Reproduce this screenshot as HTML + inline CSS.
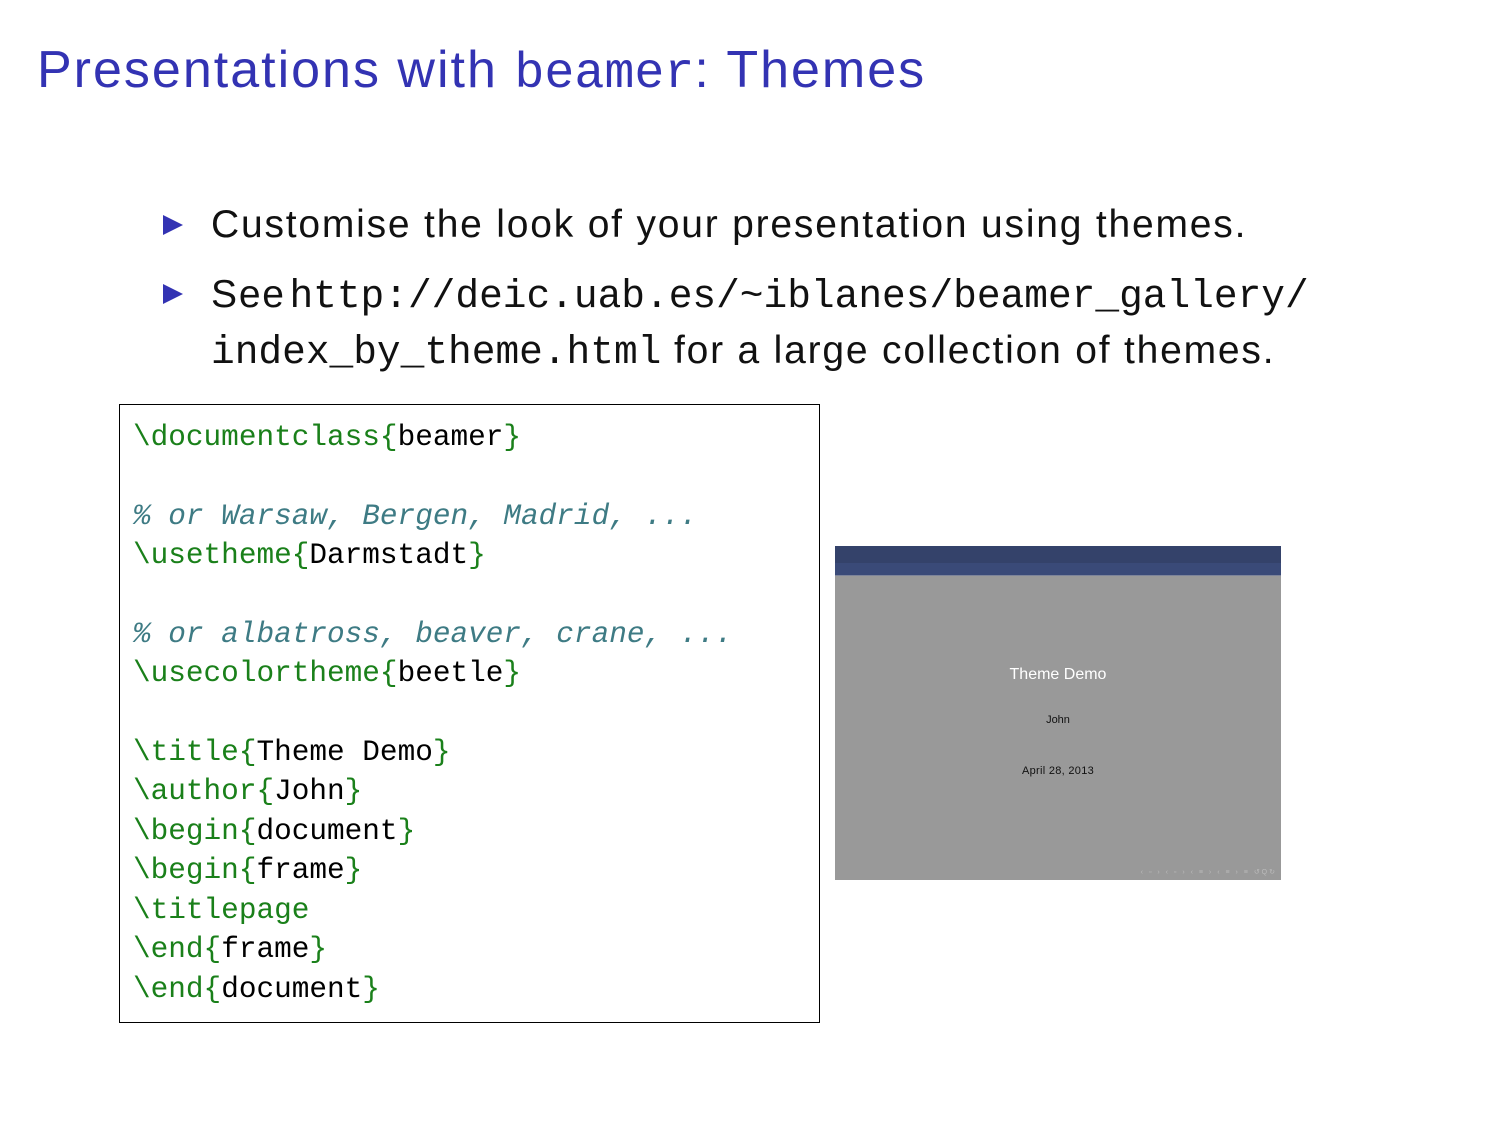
<!DOCTYPE html>
<html><head><meta charset="utf-8"><style>
body{margin:0;width:1512px;height:1134px;background:#fff;position:relative;overflow:hidden;font-family:"Liberation Sans",sans-serif}
.a{position:absolute;white-space:pre}
.t{left:37px;top:40px;font-size:52px;color:#3333b3;letter-spacing:2px}
.tm{font-family:"Liberation Mono",monospace;font-size:50px;letter-spacing:0}
.b{font-size:39px;color:#111;letter-spacing:1.8px}
.m{font-family:"Liberation Mono",monospace;font-size:39.5px;letter-spacing:0}
.tri{position:absolute;width:0;height:0;border-left:20px solid #3333b3;border-top:10px solid transparent;border-bottom:10px solid transparent}
.code{position:absolute;left:119px;top:404px;width:699px;height:617px;border:1.5px solid #000}
.c{position:absolute;left:133px;font-family:"Liberation Mono",monospace;font-size:29.4px;color:#000;white-space:pre}
.g{color:#1a801a}.cm{color:#3e7b84;font-style:italic}
</style></head><body>
<div class="a t">Presentations with <span class="tm">beamer</span>: Themes</div>
<div class="tri" style="left:163px;top:215px"></div>
<div class="a b" style="left:211px;top:203px">Customise the look of your presentation using themes.</div>
<div class="tri" style="left:163px;top:284px"></div>
<div class="a b" style="left:211px;top:273px">See <span class="m" style="margin-left:-9px">http://deic.uab.es/~iblanes/beamer_gallery/</span></div>
<div class="a b" style="left:211px;top:329px"><span class="m">index_by_theme.html</span> for a large collection of themes.</div>
<div class="code"></div>
<div class="c" style="top:421px"><span class="g">\documentclass{</span>beamer<span class="g">}</span></div>
<div class="c cm" style="top:500px">% or Warsaw, Bergen, Madrid, ...</div>
<div class="c" style="top:539px"><span class="g">\usetheme{</span>Darmstadt<span class="g">}</span></div>
<div class="c cm" style="top:618px">% or albatross, beaver, crane, ...</div>
<div class="c" style="top:657px"><span class="g">\usecolortheme{</span>beetle<span class="g">}</span></div>
<div class="c" style="top:736px"><span class="g">\title{</span>Theme Demo<span class="g">}</span></div>
<div class="c" style="top:775px"><span class="g">\author{</span>John<span class="g">}</span></div>
<div class="c" style="top:815px"><span class="g">\begin{</span>document<span class="g">}</span></div>
<div class="c" style="top:854px"><span class="g">\begin{</span>frame<span class="g">}</span></div>
<div class="c" style="top:894px"><span class="g">\titlepage</span></div>
<div class="c" style="top:933px"><span class="g">\end{</span>frame<span class="g">}</span></div>
<div class="c" style="top:973px"><span class="g">\end{</span>document<span class="g">}</span></div>
<div style="position:absolute;left:835px;top:546px;width:446px;height:334px;background:#999">
<div style="height:17px;background:#34426a"></div>
<div style="height:12px;background:#3a4a78;border-bottom:1px solid #7d849a"></div>
<div style="position:absolute;top:120px;width:100%;text-align:center;color:#fff;font-size:16px">Theme Demo</div>
<div style="position:absolute;top:168px;width:100%;text-align:center;color:#111;font-size:11px">John</div>
<div style="position:absolute;top:219px;width:100%;text-align:center;color:#111;font-size:11px;letter-spacing:0.3px">April 28, 2013</div>
<div style="position:absolute;top:322px;right:4px;color:#bbb;font-size:7px;letter-spacing:2px">‹ ▫ › ‹ ▫ › ‹ ≡ › ‹ ≡ › ≡ ↺Q↻</div>
</div>
</body></html>
